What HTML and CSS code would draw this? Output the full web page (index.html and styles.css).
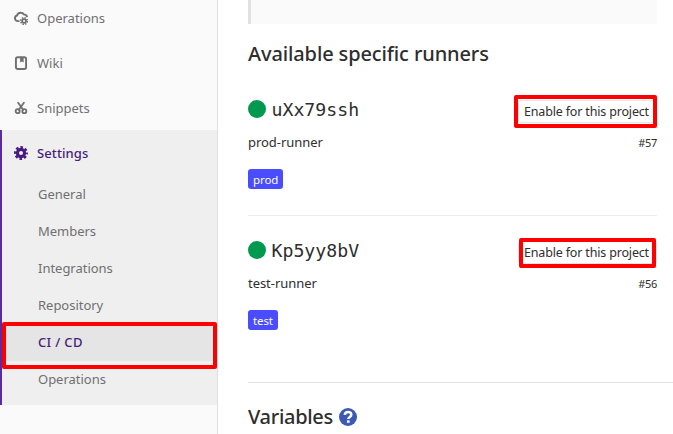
FILE: index.html
```html
<!DOCTYPE html>
<html lang="en">
<head>
<meta charset="utf-8">
<title>CI / CD Settings</title>
<link rel="stylesheet" href="styles.css">
</head>
<body>
<div class="page">
  <nav class="sidebar">
    <a class="item first"><svg class="icon" viewBox="0 0 16 16"><path d="M6.300 11.600H4.600C2.600 11.600 1.100 10 1.100 8.300c0-1.700 1-2.800 2.400-3.100C4 3 5.500 1.900 7.500 1.900c1.700 0 3 .7 3.700 2 2.200.1 3.500 1.300 3.800 3.200" fill="none" stroke="currentColor" stroke-width="2.200"/><g fill="none" stroke="currentColor"><circle cx="11.500" cy="11.500" r="2.200" stroke-width="2"/><circle cx="11.500" cy="11.500" r="3.800" stroke-width="1.800" stroke-dasharray="1.600 1.385"/></g></svg><span>Operations</span></a>
    <a class="item"><svg class="icon" viewBox="0 0 16 16"><rect x="2.200" y="1.500" width="11.600" height="13.400" rx="2" fill="none" stroke="currentColor" stroke-width="2.200"/><path d="M7 2h4v5.500L9 6.200 7 7.500z" fill="currentColor"/></svg><span>Wiki</span></a>
    <a class="item"><svg class="icon" viewBox="0 0 16 16"><g fill="none" stroke="currentColor" stroke-width="2.100"><circle cx="4.200" cy="11.600" r="2.300"/><circle cx="11.800" cy="11.600" r="2.300"/><path d="M4.700 2l5.800 8M11.300 2l-5.800 8" stroke-linecap="round"/></g></svg><span>Snippets</span></a>
    <div class="group">
      <a class="item current"><svg class="icon" viewBox="0 0 16 16"><g fill="none" stroke="currentColor"><circle cx="8" cy="8" r="4.100" stroke-width="3.600"/><circle cx="8" cy="8" r="6.600" stroke-width="2.800" stroke-dasharray="2.900 2.284" stroke-dashoffset="1.450"/></g></svg><span>Settings</span></a>
      <a class="sub">General</a>
      <a class="sub">Members</a>
      <a class="sub">Integrations</a>
      <a class="sub">Repository</a>
      <a class="sub active">CI / CD<i class="mark mark-nav"></i></a>
      <a class="sub">Operations</a>
    </div>
  </nav>
  <main class="content">
    <div class="callout"></div>
    <h4 class="title heading">Available specific runners</h4>
    <section class="runner">
      <div class="row head"><span class="dot"></span><code class="token">uXx79ssh</code><button class="enable">Enable for this project<i class="mark mark-first"></i></button></div>
      <div class="row desc"><span>prod-runner</span><small>#57</small></div>
      <span class="badge">prod</span>
    </section>
    <section class="runner second">
      <div class="row head"><span class="dot"></span><code class="token">Kp5yy8bV</code><button class="enable">Enable for this project<i class="mark mark-second"></i></button></div>
      <div class="row desc"><span>test-runner</span><small>#56</small></div>
      <span class="badge">test</span>
    </section>
    <h4 class="title variables"><span>Variables</span><svg class="help" viewBox="0 0 18 18"><circle cx="9" cy="9" r="9" fill="#3c5ab5"/><path d="M5.700 6.900C6 5 7.200 4 9 4c2 0 3.300 1.100 3.300 2.700 0 2.200-3 2.200-3 4.300" fill="none" stroke="#fff" stroke-width="2.500"/><path d="M7.900 12.300h2.700v2.500H7.900z" fill="#fff"/></svg></h4>
  </main>
</div>
</body>
</html>
```

FILE: styles.css
```css
* { box-sizing: border-box; }
body {
  margin: 0;
  background: #fff;
  color: #2e2e2e;
  font: 13px/20px "Noto Sans", "Open Sans", sans-serif;
}
.page { display: flex; height: 434px; overflow: hidden; }
.sidebar {
  width: 218px;
  flex: none;
  background: #fafafa;
  border-right: 1px solid #dfdfdf;
  color: #707070;
}
.item { display: flex; align-items: center; height: 45px; padding-left: 14px; gap: 9px; }
.first { height: 40px; padding-bottom: 4px; }
.icon { width: 14px; height: 14px; flex: none; }
.group {
  height: 275px;
  background: #efefef;
  box-shadow: inset 2px 0 #5a2ca0;
}
.current { height: 46px; color: #481c7c; font-weight: 500; }
.current span { letter-spacing: 0.1px; }
.sub { display: block; position: relative; height: 37px; padding-left: 38px; line-height: 37px; letter-spacing: -0.02px; }
.active { background: #e5e5e5; color: #481c7c; font-weight: 500; margin-left: 2px; padding-left: 36px; letter-spacing: 0.35px; }
.mark { position: absolute; border: 4px solid #f00; border-radius: 2px; pointer-events: none; }
.mark-nav { left: 0; top: -2px; width: 215px; height: 47px; }
.content { flex: 1; padding-left: 30px; }
.callout { width: 409px; height: 24px; background: #fafafa; border-left: 3px solid #e1e1e1; }
.title { display: flex; align-items: center; margin: 0; height: 60px; font-size: 20px; line-height: 28px; font-weight: 500; }
.heading { letter-spacing: -0.12px; }
.runner { width: 409px; height: 132px; padding-top: 12px; border-bottom: 1px solid #eee; }
.row { display: flex; align-items: center; }
.head { height: 25px; }
.dot { width: 18px; height: 18px; margin-left: -0.5px; border-radius: 50%; background: #00994f; }
.token { margin: 2px 0 0 6px; font: 18.2px/24px "DejaVu Sans Mono", monospace; }
.enable {
  position: relative;
  top: 3px;
  width: 139px;
  height: 23px;
  margin-left: auto;
  padding: 1px 2px 0 0;
  border: 1px solid #e5e5e5;
  border-radius: 3px;
  background: #fff;
  color: #2e2e2e;
  font: 12.5px/20px "Noto Sans", sans-serif;
  letter-spacing: -0.17px;
  white-space: nowrap;
}
.mark-first { left: -5px; top: -6px; width: 143px; height: 33px; }
.mark-second { left: 0; top: -4px; width: 137px; height: 30px; }
.desc { height: 42px; padding-bottom: 1px; justify-content: space-between; letter-spacing: -0.05px; }
.desc small { font-size: 11px; letter-spacing: -0.3px; padding-top: 2px; }
.badge {
  display: block;
  width: fit-content;
  height: 20px;
  margin-top: 6px;
  padding: 0 5px;
  border-radius: 3px;
  background: #4a4dff;
  color: #fff;
  font-size: 11.5px;
  line-height: 22px;
  letter-spacing: -0.1px;
}
.second { width: 425px; height: 167px; padding-top: 21px; border-color: #dfdfdf; }
.second .row { width: 409px; }
.variables { height: 68px; letter-spacing: -0.3px; }
.help { width: 18px; height: 18px; margin-left: 6px; }
```
